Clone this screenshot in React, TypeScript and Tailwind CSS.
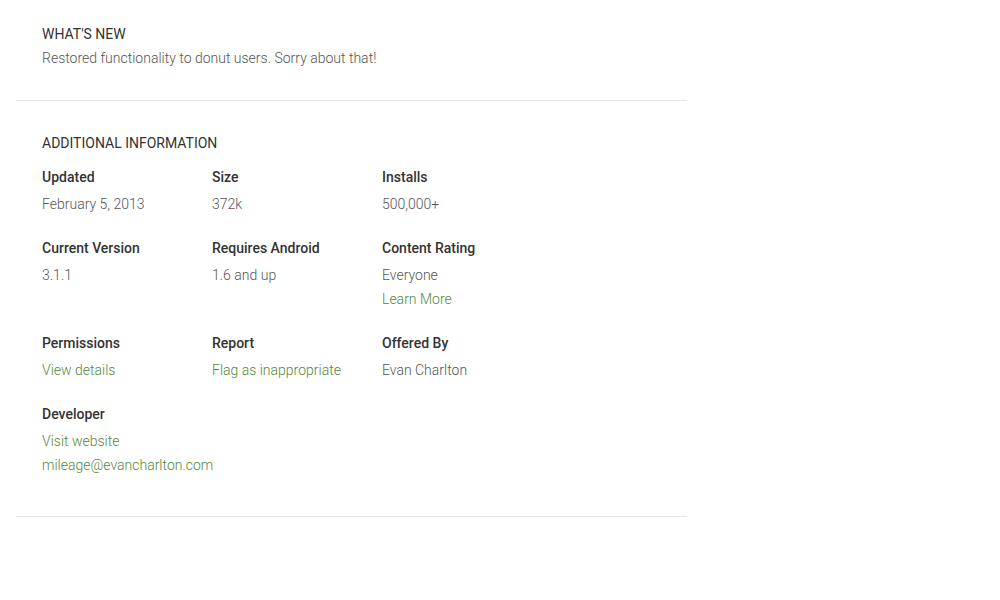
export default function App() {
  const cells: { label: string; values: { text: string; link?: boolean }[] }[] = [
    { label: "Updated", values: [{ text: "February 5, 2013" }] },
    { label: "Size", values: [{ text: "372k" }] },
    { label: "Installs", values: [{ text: "500,000+" }] },
    { label: "Current Version", values: [{ text: "3.1.1" }] },
    { label: "Requires Android", values: [{ text: "1.6 and up" }] },
    { label: "Content Rating", values: [{ text: "Everyone" }, { text: "Learn More", link: true }] },
    { label: "Permissions", values: [{ text: "View details", link: true }] },
    { label: "Report", values: [{ text: "Flag as inappropriate", link: true }] },
    { label: "Offered By", values: [{ text: "Evan Charlton" }] },
    { label: "Developer", values: [{ text: "Visit website", link: true }, { text: "mileage@evancharlton.com", link: true }] },
  ];
  return (
    <div className="w-[1000px] h-[600px] bg-white" style={{ fontFamily: "Roboto, 'Liberation Sans', sans-serif" }}>
      <div className="ml-[16px] w-[671px]">
        <div className="pl-[26px] pt-[24px] pb-[30px] border-b border-[#e5e5e5]">
          <div className="text-[14px] leading-[20px] text-[#333]">WHAT'S NEW</div>
          <div className="mt-[2px] text-[14px] leading-[24px] font-light text-[#555]">
            Restored functionality to donut users. Sorry about that!
          </div>
        </div>
        <div className="pl-[26px] pt-[32px] pb-[39px] border-b border-[#e5e5e5]">
          <div className="text-[14px] leading-[20px] text-[#333]">ADDITIONAL INFORMATION</div>
          <div className="mt-[14px] grid grid-cols-[170px_170px_170px] gap-y-[22px]">
            {cells.map((c) => (
              <div key={c.label}>
                <div className="text-[14px] leading-[20px] font-medium text-[#333]">{c.label}</div>
                <div className="mt-[5px]">
                  {c.values.map((v) => (
                    <div
                      key={v.text}
                      className={`text-[14px] leading-[24px] font-light whitespace-nowrap ${v.link ? "text-[#55883a]" : "text-[#555]"}`}
                    >
                      {v.text}
                    </div>
                  ))}
                </div>
              </div>
            ))}
          </div>
        </div>
      </div>
    </div>
  );
}
